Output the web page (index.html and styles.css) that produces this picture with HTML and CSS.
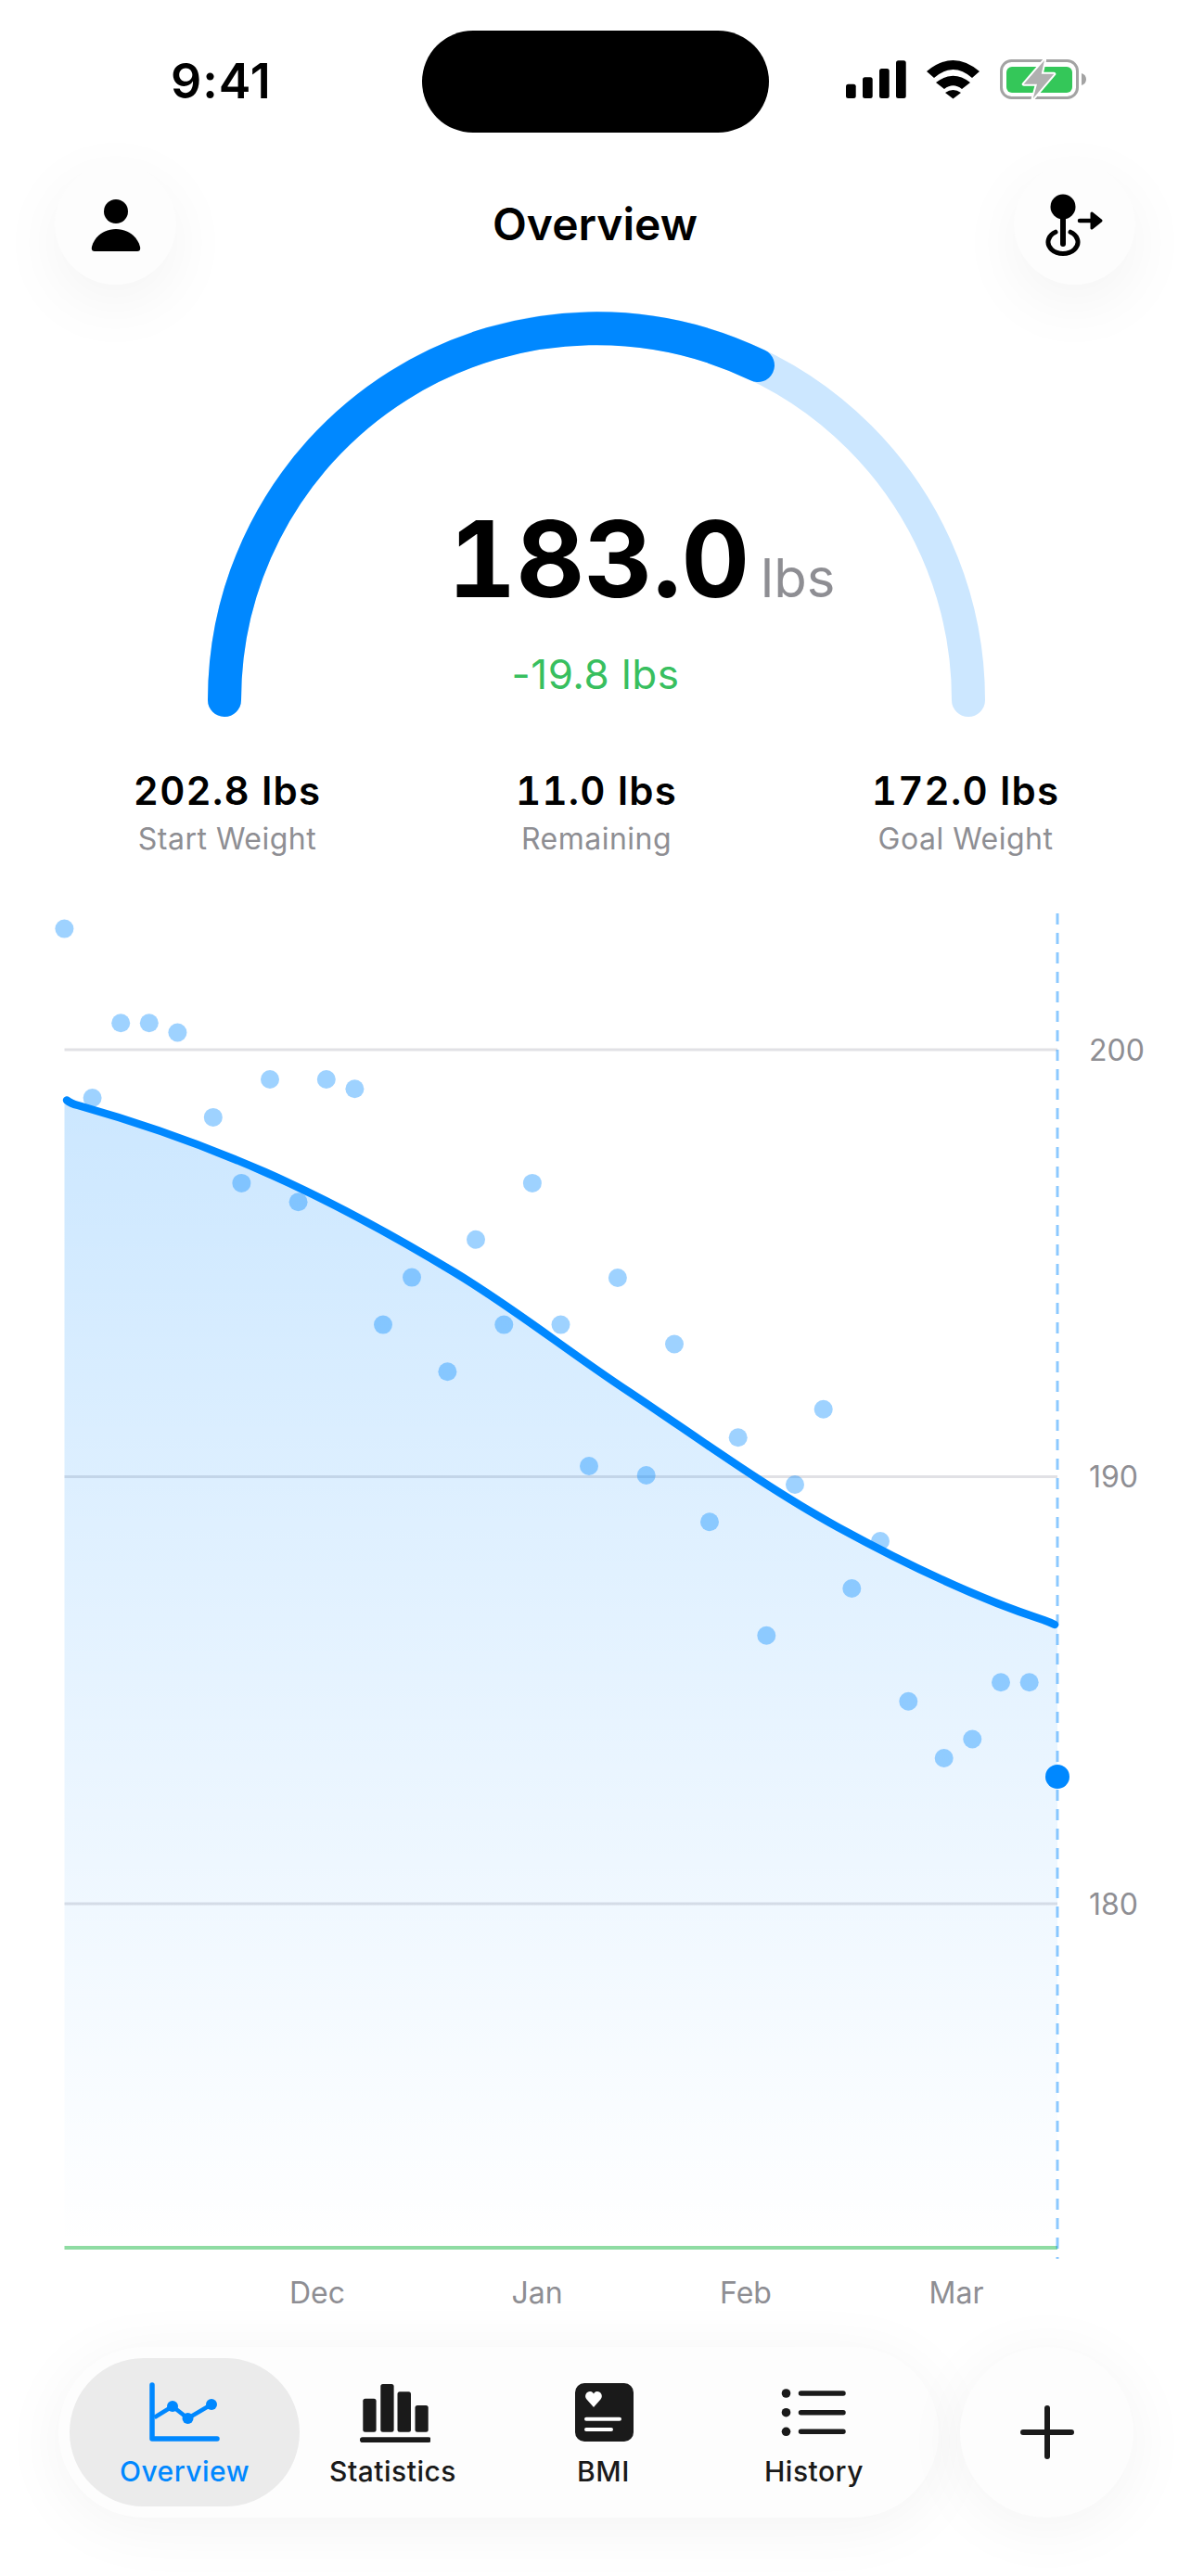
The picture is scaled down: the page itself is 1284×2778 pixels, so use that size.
FILE: index.html
```html
<!DOCTYPE html>
<html lang="en">
<head>
  <meta charset="UTF-8">
  <meta name="viewport" content="width=device-width, initial-scale=1.0">
  <title>Overview</title>
  <link rel="stylesheet" href="styles.css">
</head>
<body>
  <div class="status-bar">
    <span class="time">9:41</span>
    <div class="island"></div>
    <div class="status-icons">
      <svg width="65" height="44" viewBox="0 0 65 44">
        <rect x="0" y="26.7" width="10.7" height="15.3" rx="2.5"/>
        <rect x="18" y="19.3" width="10.7" height="22.7" rx="2.5"/>
        <rect x="36" y="10" width="10.7" height="32" rx="2.5"/>
        <rect x="54" y="1.3" width="10.7" height="40.7" rx="2.5"/>
      </svg>
      <svg width="57" height="44" viewBox="0 0 57 44">
        <path d="M0 13Q28.5-11 57 13L49 20Q28.5 2 8 20Z"/>
        <path d="M10 25Q28.5 10.5 47 25L38 32Q28.5 24.5 19 32Z"/>
        <path d="M20 36Q28.5 30 37 36L28.5 42.5Z"/>
      </svg>
      <svg width="94" height="44" viewBox="0 0 94 44">
        <rect x="1.5" y="1.5" width="82" height="40" rx="11" fill="none" stroke="#a3a3a3" stroke-width="3"/>
        <rect x="7" y="8" width="71" height="28" rx="6" fill="#34c759"/>
        <path d="M88 15C91 16 93 18 93 21.500C93 25 91 27 88 28Z" fill="#a3a3a3"/>
        <path class="bolt" d="M48 1L25.700 26.700H40L35.700 42.300L58.300 15.700H44.700Z"/>
      </svg>
    </div>
  </div>

  <header class="top-bar">
    <button class="round-btn">
      <svg width="54" height="58" viewBox="0 0 54 58">
        <circle cx="27" cy="15" r="13"/>
        <path d="M1 53C4 42 14 34 27 34C40 34 50 42 53 53Q54 58 50 58H4Q0 58 1 53Z"/>
      </svg>
    </button>
    <h1 class="title">Overview</h1>
    <button class="round-btn">
      <svg width="68" height="72" viewBox="0 0 68 72">
        <circle cx="22" cy="17" r="13.500"/>
        <path d="M22 28V57" fill="none" stroke="#000" stroke-width="6" stroke-linecap="round"/>
        <path d="M14 44.200A16 12.500 0 1 0 30 44.200" fill="none" stroke="#000" stroke-width="5" stroke-linecap="round"/>
        <path d="M40 32H56" fill="none" stroke="#000" stroke-width="4.500" stroke-linecap="round"/>
        <path d="M53 24L63 32L53 40Z" stroke="#000" stroke-width="3" stroke-linejoin="round"/>
      </svg>
    </button>
  </header>

  <section class="gauge">
    <svg class="gauge-arc" width="1284" height="480" viewBox="0 307 1284 480">
      <path d="M242 755A401 401 0 0 1 1044 755" fill="none" stroke="#cce7ff" stroke-width="36" stroke-linecap="round"/>
      <path d="M242 755A401 401 0 0 1 817 394" fill="none" stroke="#0088ff" stroke-width="36" stroke-linecap="round"/>
    </svg>
    <div class="weight">
      <span class="weight-value">183.0</span>
      <span class="weight-unit">lbs</span>
    </div>
    <div class="delta">-19.8 lbs</div>
  </section>

  <section class="stats">
    <div class="stat">
      <div class="stat-value">202.8 lbs</div>
      <div class="stat-label">Start Weight</div>
    </div>
    <div class="stat">
      <div class="stat-value">11.0 lbs</div>
      <div class="stat-label">Remaining</div>
    </div>
    <div class="stat">
      <div class="stat-value">172.0 lbs</div>
      <div class="stat-label">Goal Weight</div>
    </div>
  </section>

  <svg class="chart" width="1284" height="1530" viewBox="0 970 1284 1530">
    <defs>
      <linearGradient id="area" gradientUnits="userSpaceOnUse" x1="0" y1="1188" x2="0" y2="2423">
        <stop offset="0" stop-color="#0088ff" stop-opacity="0.2"/>
        <stop offset="1" stop-color="#0088ff" stop-opacity="0"/>
      </linearGradient>
    </defs>

    <g class="grid">
      <path d="M69.500 1132H1140"/>
      <path d="M69.500 1592.500H1140"/>
      <path d="M69.500 2053H1140"/>
    </g>
    <path class="goal-line" d="M69.500 2424H1140"/>

    <path fill="url(#area)" d="M69.500 1186L72 1186.500Q76 1190 84 1192C148 1210 215.900 1233.300 285.700 1264C355.500 1294.700 424.600 1332.700 489.800 1372C555 1411.300 607.800 1454.200 676.700 1500C745.600 1545.800 826.100 1604.700 903 1646.700C979.900 1688.700 1060 1726 1125 1747Q1132 1749.500 1140 1753V2424H69.500Z"/>

    <g class="points">
      <circle cx="69.400" cy="1001.600" r="10"/>
      <circle cx="99.600" cy="1184" r="10"/>
      <circle cx="130.200" cy="1103.300" r="10"/>
      <circle cx="160.800" cy="1103.300" r="10"/>
      <circle cx="191.400" cy="1113.500" r="10"/>
      <circle cx="229.800" cy="1204.900" r="10"/>
      <circle cx="260.400" cy="1275.900" r="10"/>
      <circle cx="291" cy="1164" r="10"/>
      <circle cx="321.600" cy="1296.300" r="10"/>
      <circle cx="351.800" cy="1164" r="10"/>
      <circle cx="382.400" cy="1174.300" r="10"/>
      <circle cx="413" cy="1428.600" r="10"/>
      <circle cx="444" cy="1377.600" r="10"/>
      <circle cx="482.400" cy="1479.200" r="10"/>
      <circle cx="513" cy="1336.700" r="10"/>
      <circle cx="543.300" cy="1428.600" r="10"/>
      <circle cx="573.900" cy="1275.900" r="10"/>
      <circle cx="604.500" cy="1428.600" r="10"/>
      <circle cx="635" cy="1581" r="10"/>
      <circle cx="665.900" cy="1378" r="10"/>
      <circle cx="696.700" cy="1591" r="10"/>
      <circle cx="727" cy="1449.500" r="10"/>
      <circle cx="765" cy="1641.300" r="10"/>
      <circle cx="795.700" cy="1550.300" r="10"/>
      <circle cx="826.300" cy="1763.700" r="10"/>
      <circle cx="857" cy="1601" r="10"/>
      <circle cx="887.700" cy="1519.700" r="10"/>
      <circle cx="918.300" cy="1713" r="10"/>
      <circle cx="949" cy="1662" r="10"/>
      <circle cx="979.300" cy="1834.700" r="10"/>
      <circle cx="1017.700" cy="1896" r="10"/>
      <circle cx="1048.300" cy="1875.500" r="10"/>
      <circle cx="1079" cy="1814.300" r="10"/>
      <circle cx="1109.700" cy="1814.300" r="10"/>
    </g>

    <path class="trend" d="M72 1186.500Q76 1190 84 1192C148 1210 215.900 1233.300 285.700 1264C355.500 1294.700 424.600 1332.700 489.800 1372C555 1411.300 607.800 1454.200 676.700 1500C745.600 1545.800 826.100 1604.700 903 1646.700C979.900 1688.700 1060 1726 1125 1747Q1132 1749.500 1137 1752"/>

    <path class="today-line" d="M1140 985V2436"/>
    <circle cx="1140" cy="1916" r="13" fill="#0088ff"/>

    <g class="axis-text">
      <text x="1174" y="1132">200</text>
      <text x="1174" y="1592.500">190</text>
      <text x="1174" y="2053">180</text>
    </g>
    <g class="axis-text month">
      <text x="342" y="2472">Dec</text>
      <text x="579" y="2472">Jan</text>
      <text x="804" y="2472">Feb</text>
      <text x="1031" y="2472">Mar</text>
    </g>
  </svg>

  <nav class="bottom">
    <div class="tab-bar">
      <div class="tab active">
        <svg width="80" height="66" viewBox="0 0 80 66">
          <path d="M5 3V61H75" fill="none" stroke="#0088ff" stroke-width="5.500" stroke-linecap="round" stroke-linejoin="round"/>
          <path d="M7.500 38L27 26L43.500 39L69 24" fill="none" stroke="#0088ff" stroke-width="4.500"/>
          <circle cx="27" cy="26" r="6" fill="#0088ff"/>
          <circle cx="43.500" cy="39" r="6" fill="#0088ff"/>
          <circle cx="69" cy="24" r="6" fill="#0088ff"/>
        </svg>
        <span>Overview</span>
      </div>
      <div class="tab">
        <svg width="80" height="66" viewBox="0 0 80 66" fill="#1a1a1a">
          <rect x="7.300" y="17.700" width="14.300" height="36" rx="2.500"/>
          <rect x="26.300" y="2" width="14.300" height="51.700" rx="2.500"/>
          <rect x="44.500" y="10.300" width="14.500" height="43.400" rx="2.500"/>
          <rect x="63.500" y="25" width="14.200" height="28.700" rx="2.500"/>
          <rect x="4" y="59.300" width="77" height="5.700" rx="2.800"/>
        </svg>
        <span>Statistics</span>
      </div>
      <div class="tab">
        <svg width="80" height="66" viewBox="0 0 80 66">
          <rect x="9" y="1" width="63" height="63" rx="10" fill="#1a1a1a"/>
          <path d="M29 27L21.500 18.500C18 14 22 9.500 25.500 10C27.500 10.200 28.500 11.500 29 12.500C29.500 11.500 30.500 10.200 32.500 10C36 9.500 40 14 36.500 18.500Z" fill="#fff"/>
          <path d="M21 39.700H57M21 51H48" fill="none" stroke="#fff" stroke-width="4" stroke-linecap="round"/>
        </svg>
        <span>BMI</span>
      </div>
      <div class="tab">
        <svg width="80" height="66" viewBox="0 0 80 66" fill="#1a1a1a">
          <circle cx="9.500" cy="12" r="4.800"/>
          <circle cx="9.500" cy="32.700" r="4.800"/>
          <circle cx="9.500" cy="53.300" r="4.800"/>
          <path d="M25.500 12H71M25.500 32.700H71M25.500 53.300H71" fill="none" stroke="#1a1a1a" stroke-width="5.500" stroke-linecap="round"/>
        </svg>
        <span>History</span>
      </div>
    </div>
    <button class="add-btn">
      <svg width="58" height="58" viewBox="0 0 58 58">
        <path d="M29 3V55M3 29H55" fill="none" stroke="#1a1a1a" stroke-width="6" stroke-linecap="round"/>
      </svg>
    </button>
  </nav>
</body>
</html>
```

FILE: styles.css
```css
* {
  box-sizing: border-box;
}
body {
  margin: 0;
  background: #fff;
  font-family: 'Inter', 'Liberation Sans', sans-serif;
  color: #000;
  width: 1284px;
  height: 2778px;
  overflow: hidden;
}
svg {
  display: block;
}

/* status bar */
.status-bar {
  display: grid;
  grid-template-columns: 455px 374px 1fr;
  align-items: center;
  padding-top: 33px;
}
.time {
  padding-left: 184px;
  font-size: 52px;
  font-weight: 600;
  line-height: 60px;
  letter-spacing: 1px;
}
.island {
  height: 110px;
  background: #000;
  border-radius: 55px;
}
.status-icons {
  display: flex;
  align-items: center;
  gap: 22px;
  padding-left: 83px;
  margin-top: -4px;
}
.bolt {
  fill: #b0b0b0;
  stroke: #fff;
  stroke-width: 4;
  stroke-linejoin: round;
  paint-order: stroke;
}

/* header */
.top-bar {
  display: flex;
  justify-content: space-between;
  align-items: center;
  margin-top: 33px;
  padding: 0 60px 0 59px;
}
.title {
  margin: 0;
  font-size: 48px;
  font-weight: 600;
}
.round-btn {
  width: 131px;
  height: 131px;
  padding: 0;
  border: none;
  border-radius: 50%;
  background: #fdfdfd;
  display: flex;
  align-items: center;
  justify-content: center;
  box-shadow: 0 20px 70px rgba(0, 0, 0, 0.05);
}

/* gauge */
.gauge {
  position: relative;
  height: 522px;
  padding-top: 246px;
  text-align: center;
}
.gauge-arc {
  position: absolute;
  top: 0;
  left: 0;
}
.weight {
  position: relative;
  display: flex;
  justify-content: center;
  align-items: baseline;
  height: 100px;
  line-height: 100px;
}
.weight-value {
  font-size: 114px;
  font-weight: 700;
  font-variant-numeric: tabular-nums;
  margin-left: 3px;
}
.weight-unit {
  font-size: 58px;
  color: #8e8e93;
  margin-left: 12px;
  margin-right: -96px;
}
.delta {
  position: relative;
  margin-top: 50px;
  font-size: 44px;
  line-height: 48px;
  letter-spacing: 0.5px;
  color: #38bf5f;
}

/* stats row */
.stats {
  display: grid;
  grid-template-columns: repeat(3, 398px);
  margin-left: 46px;
  text-align: center;
}
.stat-value {
  font-size: 42px;
  font-weight: 600;
  line-height: 48px;
  letter-spacing: 1.2px;
  font-variant-numeric: tabular-nums;
}
.stat-label {
  margin-top: 8px;
  font-size: 32px;
  line-height: 40px;
  letter-spacing: 0.5px;
  color: #8e8e93;
}

/* chart */
.chart {
  margin-top: 45px;
}
.grid path {
  stroke: #b5b5be;
  stroke-opacity: 0.4;
  stroke-width: 3;
  fill: none;
}
.goal-line {
  stroke: #8fdca3;
  stroke-width: 4;
  fill: none;
}
.points circle {
  fill: #0088ff;
  fill-opacity: 0.38;
}
.trend {
  fill: none;
  stroke: #0088ff;
  stroke-width: 8.5;
  stroke-linecap: round;
}
.today-line {
  fill: none;
  stroke: #0088ff;
  stroke-opacity: 0.45;
  stroke-width: 3;
  stroke-dasharray: 12 9;
}
.axis-text text {
  font-size: 32px;
  fill: #8e8e93;
  dominant-baseline: central;
}
.month text {
  text-anchor: middle;
}

/* bottom nav */
.bottom {
  display: flex;
  gap: 23px;
  margin-top: 31px;
  padding-left: 63px;
}
.tab-bar {
  display: flex;
  width: 949px;
  height: 184px;
  padding: 12px;
  background: #fdfdfd;
  border-radius: 92px;
  box-shadow: 0 10px 70px rgba(0, 0, 0, 0.05);
}
.tab {
  display: flex;
  flex-direction: column;
  align-items: center;
  width: 227px;
  padding-top: 26px;
  font-size: 30px;
  font-weight: 450;
  line-height: 36px;
  letter-spacing: 0.5px;
  color: #1a1a1a;
}
.tab svg {
  margin-bottom: 12px;
}
.tab.active {
  width: 248px;
  margin-right: -13px;
  border-radius: 80px;
  background: #ebebeb;
  color: #0088ff;
}
.add-btn {
  width: 187px;
  height: 184px;
  padding: 0;
  border: none;
  border-radius: 50%;
  background: #fdfdfd;
  display: flex;
  align-items: center;
  justify-content: center;
  box-shadow: 0 10px 70px rgba(0, 0, 0, 0.05);
}
```
